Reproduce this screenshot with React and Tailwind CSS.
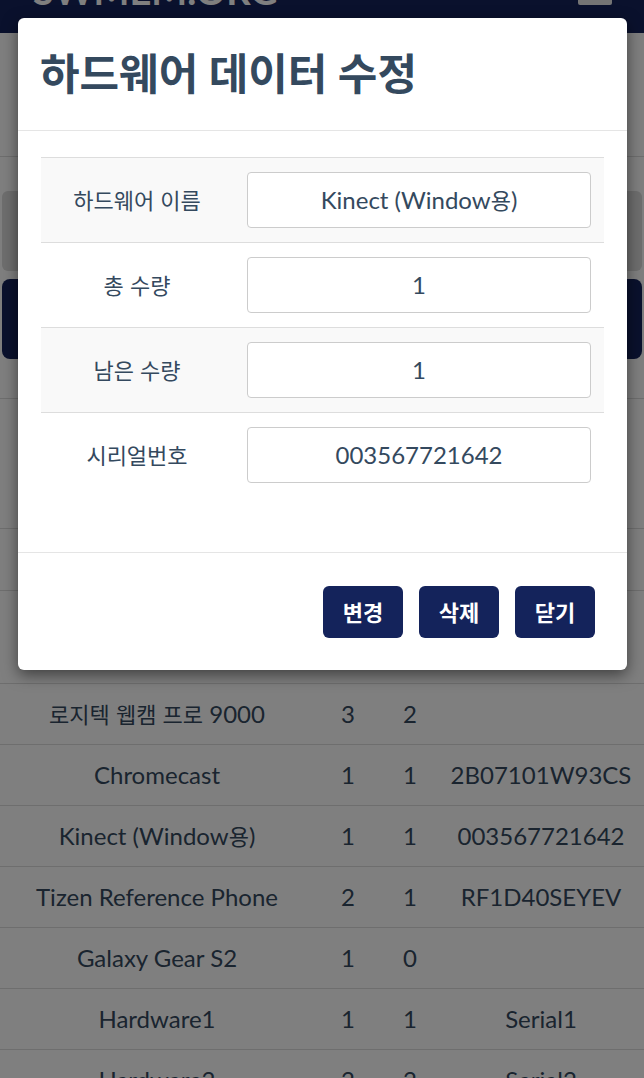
import React from 'react';

const FONT = { fontFamily: "Lato, 'Noto Sans CJK KR', 'Noto Sans', sans-serif" };

// Hangul runs render a touch smaller than the Latin text around them
function Mixed({ text }) {
  return (
    <span className="whitespace-nowrap">
      {text.split(/([\uAC00-\uD7A3]+)/).map((part, i) =>
        /[\uAC00-\uD7A3]/.test(part) ? (
          <span key={i} className="text-[22px]">{part}</span>
        ) : (
          <React.Fragment key={i}>{part}</React.Fragment>
        )
      )}
    </span>
  );
}

const ROWS = [
  ['로지텍 웹캠 프로 9000', '3', '2', ''],
  ['Chromecast', '1', '1', '2B07101W93CS'],
  ['Kinect (Window용)', '1', '1', '003567721642'],
  ['Tizen Reference Phone', '2', '1', 'RF1D40SEYEV'],
  ['Galaxy Gear S2', '1', '0', ''],
  ['Hardware1', '1', '1', 'Serial1'],
  ['Hardware2', '2', '2', 'Serial2'],
];

const FIELDS = [
  ['하드웨어 이름', 'Kinect (Window용)'],
  ['총 수량', '1'],
  ['남은 수량', '1'],
  ['시리얼번호', '003567721642'],
];

function Background() {
  return (
    <div className="bg-white">
      <div className="h-[33px] bg-[#14235b] flex items-start justify-between pl-[33px] pr-[32px] overflow-hidden">
        <span className="text-white font-bold text-[38px] leading-none mt-[-29px]">SWMEM.ORG</span>
        <div className="w-[34px] h-[5px] bg-[#e8e8e8] rounded-b-[2px]" />
      </div>
      <div className="h-[124px] border-b border-[#dddddd]" />
      <div className="px-[2px] pt-[34px] pb-[39px] border-b border-[#dddddd]">
        <div className="h-[80px] rounded-md bg-[#dcdcdc]" />
        <div className="mt-[8px] h-[80px] rounded-lg bg-[#14235b]" />
      </div>
      <div className="h-[130px] border-b border-[#dddddd]" />
      <div className="h-[62px] border-b border-[#dddddd]" />
      <div className="h-[93px] border-b border-[#dddddd]" />
      {ROWS.map((r) => (
        <div
          key={r[0]}
          className="h-[61px] border-b border-[#dddddd] grid grid-cols-[314px_68px_56px_1fr] items-center text-center text-[24px] leading-[30px] text-[#34495e]"
        >
          {r.map((c, i) => (
            <div key={i}>
              <Mixed text={c} />
            </div>
          ))}
        </div>
      ))}
    </div>
  );
}

function Modal() {
  return (
    <div className="absolute left-[18px] top-[18px] w-[609px] bg-white rounded-[6px] shadow-[0_5px_15px_rgba(0,0,0,0.5)]">
      <div className="px-[22px] py-[34px] border-b border-[#e5e5e5]">
        <h2 className="text-[43px] leading-[44px] font-bold text-[#34495e] whitespace-nowrap">하드웨어 데이터 수정</h2>
      </div>
      <div className="px-[23px] pt-[26px] pb-[55px]">
        {FIELDS.map(([label, value], i) => (
          <div key={label} className={`flex border-t border-[#dddddd] ${i % 2 === 0 ? 'bg-[#f9f9f9]' : 'bg-white'}`}>
            <div className="w-[192px] flex items-center justify-center text-[24px] text-[#34495e]">
              <Mixed text={label} />
            </div>
            <div className="flex-1 pl-[14px] pr-[13px] py-[14px]">
              <div className="h-[56px] bg-white border border-[#cccccc] rounded-[4px] flex items-center justify-center text-[24px] text-[#34495e]">
                <Mixed text={value} />
              </div>
            </div>
          </div>
        ))}
      </div>
      <div className="border-t border-[#e5e5e5] pt-[33px] pb-[32px] pr-[32px] flex justify-end gap-[16px]">
        {['변경', '삭제', '닫기'].map((t) => (
          <button
            key={t}
            className="w-[80px] h-[52px] rounded-[6px] bg-[#14235b] text-white font-bold text-[22px]"
          >
            {t}
          </button>
        ))}
      </div>
    </div>
  );
}

export default function App() {
  return (
    <div style={FONT} className="relative w-[644px] h-[1078px] overflow-hidden">
      <Background />
      <div className="absolute inset-0 bg-black/50" />
      <Modal />
    </div>
  );
}
